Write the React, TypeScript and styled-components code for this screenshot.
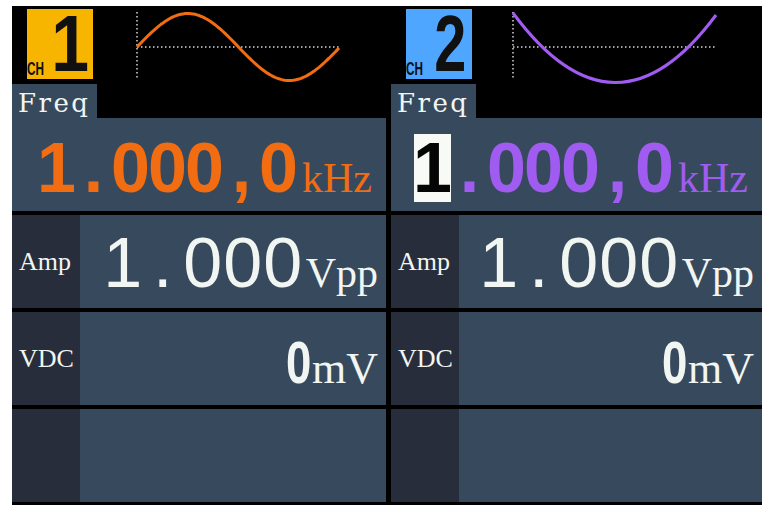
import React from 'react';
import styled, { createGlobalStyle } from 'styled-components';

const PANEL = '#374a5d';
const LABEL_BG = '#272d3b';
const TEXT = '#f2f6f2';

const GlobalStyle = createGlobalStyle`
  html, body {
    margin: 0;
    background: #ffffff;
  }
`;

const Frame = styled.div`
  display: grid;
  grid-template-columns: 374px 371px;
  column-gap: 5px;
  width: 750px;
  height: 499px;
  margin: 6px 0 0 12px;
  background: #000;
`;

const Channel = styled.div`
  display: flex;
  flex-direction: column;
  min-width: 0;
`;

const Header = styled.div`
  display: flex;
  height: 78px;
  padding-top: 3px;
  box-sizing: border-box;
`;

const Badge = styled.div<{ $bg: string; $gap: number }>`
  display: flex;
  align-items: flex-end;
  justify-content: center;
  gap: ${(p) => p.$gap}px;
  width: 66px;
  height: 70px;
  margin-left: 15px;
  background: ${(p) => p.$bg};
  color: #101010;
  font-family: 'Liberation Sans', Arial, sans-serif;
  font-weight: 700;
`;

const BadgeCh = styled.span`
  display: block;
  width: 17px;
  font-size: 19px;
  line-height: 14px;
  margin-bottom: 3px;
  transform: scaleX(0.62);
  transform-origin: left bottom;
  white-space: nowrap;
`;

const BadgeNum = styled.span<{ $squeeze: number }>`
  display: block;
  font-size: 80px;
  line-height: 70px;
  transform: scaleX(${(p) => p.$squeeze});
  transform-origin: center bottom;
`;

const WaveBox = styled.svg`
  flex: 1;
  height: 78px;
  margin-top: -3px;
`;

const TabRow = styled.div`
  height: 34px;
`;

const Tab = styled.div`
  width: 85px;
  height: 34px;
  box-sizing: border-box;
  padding: 4px 0 0 6px;
  background: ${PANEL};
  color: ${TEXT};
  font-family: 'DejaVu Serif', 'Liberation Serif', serif;
  font-size: 26px;
  line-height: 30px;
  letter-spacing: 2.5px;
  white-space: nowrap;
`;

const Rows = styled.div`
  display: flex;
  flex-direction: column;
  gap: 4px;
`;

const Row = styled.div`
  display: flex;
  height: 93px;
`;

const Label = styled.div`
  display: flex;
  align-items: center;
  width: 68px;
  padding-left: 7px;
  box-sizing: border-box;
  background: ${LABEL_BG};
  color: ${TEXT};
  font-family: 'Liberation Serif', 'Times New Roman', serif;
  font-size: 26px;
`;

const Value = styled.div<{ $top: number; $right: number; $color: string }>`
  flex: 1;
  display: flex;
  justify-content: flex-end;
  align-items: baseline;
  padding: ${(p) => p.$top}px ${(p) => p.$right}px 0 0;
  background: ${PANEL};
  color: ${(p) => p.$color};
  white-space: nowrap;
  overflow: hidden;
`;

const Digits = styled.span<{ $size: number; $bold?: boolean; $squeeze?: number }>`
  font-family: 'Liberation Sans', Arial, sans-serif;
  font-size: ${(p) => p.$size}px;
  font-weight: ${(p) => (p.$bold ? 700 : 400)};
  line-height: 1;
  white-space: nowrap;
  transform: scaleX(${(p) => p.$squeeze ?? 1});
  transform-origin: right bottom;
`;

const Cell = styled.span<{ $width: number; $cursor?: boolean }>`
  display: inline-flex;
  justify-content: center;
  width: ${(p) => p.$width}px;
  ${(p) =>
    p.$cursor &&
    `
    height: 68px;
    line-height: 68px;
    background: #f8faf6;
    color: #050505;
  `}
`;

const Unit = styled.span<{ $size: number; $gap: number }>`
  font-family: 'Liberation Serif', 'Times New Roman', serif;
  font-size: ${(p) => p.$size}px;
  line-height: 1;
  margin-left: ${(p) => p.$gap}px;
`;

const Cells = ({ text, width, cursor }: { text: string; width: number; cursor?: boolean }) => (
  <>
    {text.split('').map((ch, i) => (
      <Cell key={i} $width={width} $cursor={cursor && i === 0}>
        {ch}
      </Cell>
    ))}
  </>
);

type WaveKind = 'sine' | 'bowl';

const Wave = ({ kind, color, axisX, axisEnd }: { kind: WaveKind; color: string; axisX: number; axisEnd: number }) => {
  let d = '';
  if (kind === 'sine') {
    const pts: string[] = [];
    for (let i = 0; i <= 203; i += 2) {
      const y = 41 - 33.5 * Math.sin((2 * Math.PI * i) / 203);
      pts.push(`${(axisX + i).toFixed(1)},${y.toFixed(1)}`);
    }
    d = 'M' + pts.join(' L');
  } else {
    d = `M${axisX},7 Q${axisX + 102},145 ${axisX + 203},9`;
  }
  return (
    <WaveBox>
      <line x1={axisX} y1={6} x2={axisX} y2={73} stroke="#d8d8d8" strokeWidth={1.5} strokeDasharray="1.5 2.5" />
      <line x1={axisX} y1={41} x2={axisEnd} y2={41} stroke="#d8d8d8" strokeWidth={1.5} strokeDasharray="1.5 2.5" />
      <path d={d} fill="none" stroke={color} strokeWidth={3} strokeLinejoin="round" />
    </WaveBox>
  );
};

type ChannelProps = {
  num: string;
  badge: string;
  gap: number;
  squeeze: number;
  color: string;
  wave: WaveKind;
  axisX: number;
  axisEnd: number;
  cursor?: boolean;
};

const ChannelView = ({ num, badge, gap, squeeze, color, wave, axisX, axisEnd, cursor }: ChannelProps) => (
  <Channel>
    <Header>
      <Badge $bg={badge} $gap={gap}>
        <BadgeCh>CH</BadgeCh>
        <BadgeNum $squeeze={squeeze}>{num}</BadgeNum>
      </Badge>
      <Wave kind={wave} color={color} axisX={axisX} axisEnd={axisEnd} />
    </Header>
    <TabRow>
      <Tab>Freq</Tab>
    </TabRow>
    <Rows>
      <Row>
        <Value $top={15} $right={14} $color={color}>
          <Digits $size={70} $bold>
            <Cells text="1.000,0" width={37} cursor={cursor} />
          </Digits>
          <Unit $size={42} $gap={5}>kHz</Unit>
        </Value>
      </Row>
      <Row>
        <Label>Amp</Label>
        <Value $top={13} $right={8} $color={TEXT}>
          <Digits $size={70}>
            <Cells text="1.000" width={40} />
          </Digits>
          <Unit $size={42} $gap={3}>Vpp</Unit>
        </Value>
      </Row>
      <Row>
        <Label>VDC</Label>
        <Value $top={21} $right={8} $color={TEXT}>
          <Digits $size={60} $bold $squeeze={0.76}>0</Digits>
          <Unit $size={44} $gap={1}>mV</Unit>
        </Value>
      </Row>
      <Row>
        <Label />
        <Value $top={0} $right={0} $color={TEXT} />
      </Row>
    </Rows>
  </Channel>
);

const App = () => (
  <>
    <GlobalStyle />
    <Frame>
      <ChannelView num="1" badge="#f7b500" gap={4} squeeze={0.85} color="#f26c12" wave="sine" axisX={44} axisEnd={247} />
      <ChannelView
        num="2"
        badge="#4fa6ff"
        gap={5}
        squeeze={0.72}
        color="#a05cf0"
        wave="bowl"
        axisX={41}
        axisEnd={245}
        cursor
      />
    </Frame>
  </>
);

export default App;
